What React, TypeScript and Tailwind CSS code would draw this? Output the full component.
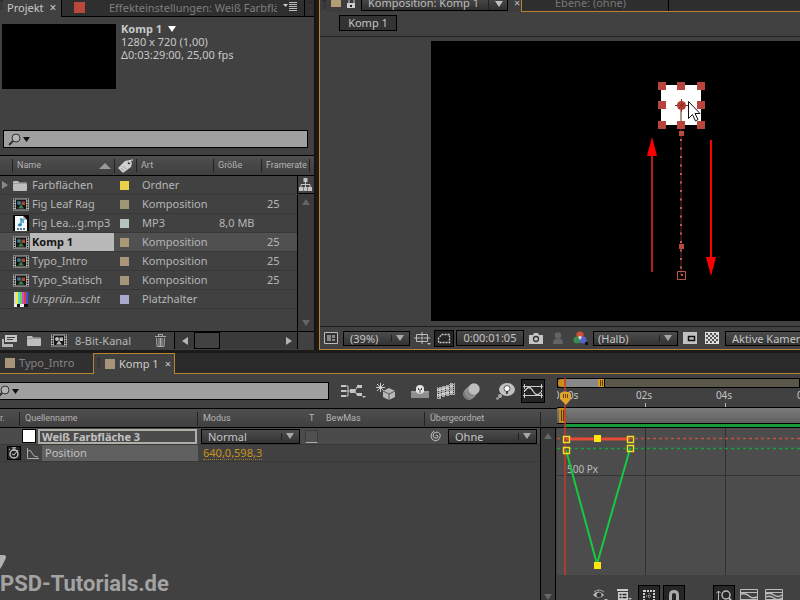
import React from "react";

const sans = "font-['Noto_Sans','Open_Sans',sans-serif]";
const small = "font-[Roboto,sans-serif] text-[9px] font-normal text-[#b4b4b4]";

function Down({ className = "" }: { className?: string }) {
  return (
    <svg width="8" height="6" viewBox="0 0 8 6" className={"shrink-0 " + className} fill="currentColor" aria-hidden="true">
      <path d="M0 0h8L4 6z" />
    </svg>
  );
}

function Grip() {
  return (
    <svg width="4" height="12" className="shrink-0" aria-hidden="true">
      <path d="M0 1h3M0 3h3M0 5h3M0 7h3M0 9h3" stroke="#161616" />
      <path d="M0 2h3M0 4h3M0 6h3M0 8h3M0 10h3" stroke="#5c5c5c" strokeWidth=".6" />
    </svg>
  );
}

function Dropdown({ label, value, width, pad = "pl-1" }: { label: string; value: string; width: string; pad?: string }) {
  return (
    <span className={"relative block h-[15px] shrink-0 border border-black bg-linear-to-b from-[#4c4c4c] to-[#333] " + width}>
      <select aria-label={label} className={"block h-full w-full appearance-none bg-transparent text-[11px] leading-[13px] text-[#c6c6c6] outline-none " + pad}>
        <option>{value}</option>
      </select>
      <span className="pointer-events-none absolute inset-y-0 right-0 flex w-[18px] items-center justify-center">
        <span className="absolute inset-y-[3px] left-0 w-px bg-[#202020]" />
        <Down className="text-[#a8a8a8]" />
      </span>
    </span>
  );
}

function SearchBox({ label, className, cut }: { label: string; className: string; cut?: boolean }) {
  return (
    <label className={"flex h-[18px] items-center border border-black bg-[#a0a0a0] " + className}>
      <svg width={cut ? 20 : 27} height="14" viewBox={cut ? "7 0 20 14" : "0 0 27 14"} aria-hidden="true" className="shrink-0">
        <circle cx="12" cy="6" r="4" fill="#b4b4b4" stroke="#333" />
        <path d="M9 9l-4 4" stroke="#333" strokeWidth="2" />
        <path d="M19 5h7l-3.500 5z" fill="#111" />
      </svg>
      <input aria-label={label} className="min-w-0 flex-1 bg-transparent text-[11px] text-black outline-none" />
    </label>
  );
}

function CompIcon({ mono }: { mono?: boolean }) {
  return (
    <svg width="16" height="13" viewBox="0 0 16 13" aria-hidden="true" className="shrink-0">
      <path d="M0 .5h16v12H0z" fill="#b4b4b4" />
      <path d="M1.500 1v11M14.500 1v11" stroke="#222" strokeDasharray="1.500 1" strokeWidth="1.500" />
      <path d="M3 1.500h10v10H3z" fill="#151515" />
      <circle cx="6" cy="5" r="2" fill={mono ? "#bbb" : "#3d7894"} />
      <path d="M8.500 3.500h3.500v3.500H8.500z" fill={mono ? "#bbb" : "#a5492f"} />
      <path d="M5 10.500l3-4 3 4z" fill={mono ? "#bbb" : "#3b8145"} />
    </svg>
  );
}

function FolderIcon() {
  return (
    <svg width="14" height="11" viewBox="0 0 14 11" aria-hidden="true" className="shrink-0">
      <path d="M0 2q0-1 1-1h4l1 1.500h7q1 0 1 1V10q0 1-1 1H1q-1 0-1-1z" fill="#bdbdbd" />
      <path d="M0 3.500h14" stroke="#888" strokeWidth=".6" />
    </svg>
  );
}

function Mp3Icon() {
  return (
    <svg width="16" height="16" viewBox="0 0 16 16" aria-hidden="true" className="shrink-0">
      <path d="M0 0h16v16H0z" fill="#050505" />
      <path d="M2 1h8l4 4v11H2z" fill="#f4f7fa" />
      <path d="M10 1v4h4z" fill="#aab4be" />
      <path d="M8 3v7M8 4q3 1 2 4" stroke="#2386bd" strokeWidth="1.300" fill="none" />
      <ellipse cx="6.800" cy="10" rx="2" ry="1.400" fill="#2386bd" />
      <path d="M4 14h8" stroke="#58798e" strokeDasharray="2 1" strokeWidth="2" />
    </svg>
  );
}

function BarsIcon() {
  const colors = ["#d8d8d8", "#f0ee38", "#58d4dd", "#65d24b", "#d64bc9", "#d64343", "#4850ce"];
  return (
    <svg width="16" height="15" viewBox="0 0 16 15" aria-hidden="true" className="shrink-0">
      {colors.map((c, i) => (
        <rect key={c} x={1 + i * 2} width="2.200" height="12" fill={c} />
      ))}
      <path d="M1 12h14v3H1z" fill="#111" />
      <path d="M1 12h3v3H1zM7 12h4v3H7z" fill="#eee" />
    </svg>
  );
}

const items = [
  { name: "Farbflächen", kind: "folder", color: "bg-[#e8d248]", type: "Ordner", size: "", rate: "" },
  { name: "Fig Leaf Rag", kind: "comp", color: "bg-[#9d9775]", type: "Komposition", size: "", rate: "25" },
  { name: "Fig Lea...g.mp3", kind: "mp3", color: "bg-[#b5c2bd]", type: "MP3", size: "8,0 MB", rate: "" },
  { name: "Komp 1", kind: "comp", color: "bg-[#a99878]", type: "Komposition", size: "", rate: "25", selected: true },
  { name: "Typo_Intro", kind: "comp", color: "bg-[#a9957c]", type: "Komposition", size: "", rate: "25" },
  { name: "Typo_Statisch", kind: "comp", color: "bg-[#a3967a]", type: "Komposition", size: "", rate: "25" },
  { name: "Ursprün...scht", kind: "bars", color: "bg-[#aaa8cc]", type: "Platzhalter", size: "", rate: "", italic: true },
];

function ItemIcon({ kind }: { kind: string }) {
  if (kind === "folder") return <FolderIcon />;
  if (kind === "mp3") return <Mp3Icon />;
  if (kind === "bars") return <BarsIcon />;
  return <CompIcon />;
}

function ProjectPanel() {
  const th = "border-b border-black p-0 text-left align-middle " + small;
  const cell = "border-b border-[#383838] p-0";
  return (
    <section className="flex w-[316px] shrink-0 flex-col border-r-2 border-[#151515] bg-[#414141]">
      <div className="flex h-[17px] shrink-0 items-stretch bg-[#2d2d2d] text-[11px] leading-4">
        <div className="flex w-[61px] items-start bg-[#414141] text-[#cacaca]">
          <Grip />
          <button className="ml-[3px]">Projekt</button>
          <button aria-label="Projekt schließen" className="ml-1.5 text-[12px]">×</button>
        </div>
        <div className="flex min-w-0 flex-1 items-start border-b border-l border-black bg-[#2f2f2f]">
          <span className="mt-0.5 ml-3 size-[11px] shrink-0 bg-[#b8483c]" />
          <button className="ml-6 w-[168px] overflow-hidden text-left whitespace-nowrap text-[#7e7e7e]">Effekteinstellungen: Weiß Farbfläche 3</button>
          <button aria-label="Bedienfeldmenü" className="mt-px ml-1.5">
            <svg width="15" height="11" viewBox="0 0 15 11">
              <path d="M0 3h5L2.500 6z" fill="#ccc" />
              <path d="M6 1.500h8M6 3.500h8M6 5.500h8M6 7.500h8M6 9.500h8" stroke="#bbb" />
            </svg>
          </button>
          <span className="ml-1.5 flex h-full items-center border-l border-black pl-1"><Grip /></span>
        </div>
      </div>

      <div className="flex h-[113px] shrink-0 gap-[5px] pl-0.5">
        <div className="mt-[7px] h-[65px] w-[114px] bg-black" />
        <div className="pt-[5px] text-[11px] leading-[13px] whitespace-nowrap text-[#c8c8c8]">
          <h1 className="flex items-center gap-1.5 font-bold">Komp 1 <Down className="text-white" /></h1>
          <p>1280 x 720 (1,00)</p>
          <p>Δ0:03:29:00, 25,00 fps</p>
        </div>
      </div>
      <SearchBox label="Projekt durchsuchen" className="mr-1.5 ml-[3px] shrink-0" />

      <table className="mt-[7px] w-full table-fixed border-collapse border-t border-black text-[11px] text-[#b6b6b6]">
        <colgroup>
          <col className="w-[114px]" />
          <col className="w-[22px]" />
          <col className="w-[77px]" />
          <col className="w-[48px]" />
          <col />
          <col className="w-[17px]" />
        </colgroup>
        <thead>
          <tr className="h-5 bg-linear-to-b from-[#4f4f4f] to-[#3e3e3e]">
            <th className={th}>
              <span className="ml-3 flex items-center justify-between border-l border-[#222] pl-1">
                Name
                <svg width="12" height="6" viewBox="0 0 12 6" className="mr-[3px]"><path d="M0 6l6-6 6 6z" fill="#999" /></svg>
              </span>
            </th>
            <th className={th}>
              <span className="flex border-l border-[#222] pl-0.5">
                <svg width="16" height="14" viewBox="0 0 16 14" aria-label="Etikett">
                  <path d="M8 2l5-1 2 3-1 4-8 6-5-5z" fill="#d0d0d0" />
                  <circle cx="12" cy="4" r="1.300" fill="#333" />
                  <path d="M12 4q1-4 4-3" stroke="#eee" fill="none" />
                  <path d="M4 9l3 3M6 7l3 3" stroke="#888" strokeWidth=".7" />
                </svg>
              </span>
            </th>
            <th className={th}><span className="block border-l border-[#222] pl-1">Art</span></th>
            <th className={th}><span className="block border-l border-[#222] pl-1">Größe</span></th>
            <th className={th} colSpan={2}><span className="mr-1 block border-x border-[#222] pl-1">Framerate</span></th>
          </tr>
        </thead>
        <tbody>
          {items.map((it, i) => (
            <tr key={it.name} className={"h-[19px] " + (it.selected ? "bg-[#505050]" : "")}>
              <td className={cell}>
                <span className="flex h-[18px] items-center whitespace-nowrap">
                  <span className="w-[13px] shrink-0">
                    {it.kind === "folder" && (
                      <svg width="6" height="8" viewBox="0 0 6 8" className="ml-0.5"><path d="M0 0l6 4-6 4z" fill="#8a8a8a" /></svg>
                    )}
                  </span>
                  <span className="flex w-[17px] shrink-0"><ItemIcon kind={it.kind} /></span>
                  <span className={"h-[18px] flex-1 pl-0.5 leading-[18px] " + (it.selected ? "bg-[#b9b9b9] font-bold text-[#151515]" : it.italic ? "italic" : "")}>{it.name}</span>
                </span>
              </td>
              <td className={cell}><span className={"ml-1.5 block size-[9px] " + it.color} /></td>
              <td className={cell + " pl-1.5 leading-[18px]"}>{it.type}</td>
              <td className={cell + " pl-1.5 leading-[18px] whitespace-nowrap"}>{it.size}</td>
              <td className={cell + " pl-1.5 leading-4"}>{it.rate}</td>
              {i === 0 && (
                <td rowSpan={8} className="border-l border-black p-0 align-top">
                  <div className="flex h-[155px] flex-col items-center">
                    <button aria-label="Flussdiagramm" className="flex h-[18px] w-full items-center justify-center border-b border-black">
                      <svg width="13" height="13" viewBox="0 0 13 13" fill="#c4c4c4">
                        <path d="M4.500 0h4v4h-4zM0 9h4v4H0zM4.500 9h4v4h-4zM9 9h4v4H9z" />
                        <path d="M6.500 4v5M2 9V6.500h9V9" fill="none" stroke="#c4c4c4" />
                      </svg>
                    </button>
                    <div className="flex w-full flex-1 flex-col items-center justify-between bg-[#3b3b3b] py-[5px] text-[#656565]">
                      <button aria-label="Nach oben" className="flex"><Down className="rotate-180" /></button>
                      <button aria-label="Nach unten" className="flex"><Down /></button>
                    </div>
                  </div>
                </td>
              )}
            </tr>
          ))}
          <tr className="h-[22px]"><td colSpan={5} /></tr>
        </tbody>
      </table>

      <div className="flex h-[18px] shrink-0 items-center border-t border-black text-[11px] text-[#b6b6b6]">
        <button aria-label="Interpretieren" className="ml-0.5">
          <svg width="15" height="12" viewBox="0 0 15 12">
            <path d="M3 0h12v7H3z" fill="#c5c5c5" />
            <path d="M5 2.500h8M5 4.500h6" stroke="#444" />
            <path d="M0 4h2v5h9v3H0z" fill="#b5b5b5" />
          </svg>
        </button>
        <button aria-label="Neuer Ordner" className="ml-2.5"><FolderIcon /></button>
        <button aria-label="Neue Komposition" className="ml-2.5"><CompIcon mono /></button>
        <button className="ml-2 leading-4">8-Bit-Kanal</button>
        <button aria-label="Löschen" className="ml-6">
          <svg width="11" height="13" viewBox="0 0 11 13" fill="none" stroke="#aaa">
            <path d="M0 2.500h11M3.500 2V.5h4V2M1.500 4l.5 8.500h7l.5-8.500M4 4v8M5.500 4v8M7 4v8" />
          </svg>
        </button>
        <div className="ml-2 flex h-full flex-1 items-stretch border-l border-black bg-[#3a3a3a]">
          <button aria-label="Nach links" className="flex w-[19px] items-center justify-center"><Down className="rotate-90 text-[#b5b5b5]" /></button>
          <span className="w-[26px] border border-black bg-[#424242]" />
          <button aria-label="Nach rechts" className="ml-auto flex w-[17px] items-center justify-center"><Down className="-rotate-90 text-[#b5b5b5]" /></button>
        </div>
        <span className="h-full w-[17px] border-l border-black" />
      </div>
    </section>
  );
}

const handles = [
  [231, 45], [250, 45], [270, 45], [231, 64], [270, 64], [231, 84], [250, 84], [270, 84],
];

function Canvas() {
  return (
    <svg className="block h-[280px] w-full bg-black" aria-label="Kompositionsansicht">
      <path d="M230 44h40v40h-40z" fill="#fff" />
      <path d="M250 64v170" stroke="#6b2722" />
      <path d="M250 98v134" stroke="#c25c53" strokeWidth="2" strokeDasharray="2 6.500" />
      {handles.map(([x, y]) => (
        <path key={`${x}-${y}`} d={`M${x - 4} ${y - 4}h8v8h-8z`} fill="#b8453c" />
      ))}
      <circle cx="250.500" cy="64.500" r="4.500" fill="#b8453c" />
      <path d="M244 64.500h13M250.500 58v13M247 61l7 7M254 61l-7 7" stroke="#9a3028" />
      <path d="M248 90h5v5h-5zM248 203h5v5h-5z" fill="#bb4940" />
      <path d="M246.500 230.500h8v8h-8z" fill="none" stroke="#c0564c" />
      <path d="M250 233h2v2h-2z" fill="#c0564c" />
      <path d="M221 115v116" stroke="#b61d1d" strokeWidth="2" />
      <path d="M221 96l5 19h-10z" fill="red" />
      <path d="M280 99v118" stroke="red" strokeWidth="2" />
      <path d="M280 235l-5-19h10z" fill="red" />
      <path d="M257.500 60.500v17l4-4 3 6.500 2.500-1.500-3-6h5z" fill="#fff" stroke="#111" />
    </svg>
  );
}

function CompPanel() {
  return (
    <section className="ml-[3px] flex min-w-0 flex-1 flex-col overflow-hidden border-b border-l border-[#b98432] bg-[#414141]">
      <div className="flex h-3 shrink-0 items-stretch text-[11px] whitespace-nowrap text-[#bebebe]">
        <div className="flex w-[201px] shrink-0 items-start bg-[#3d3d3d] pl-[3px]">
          <Grip />
          <span className="ml-1 h-[7px] w-2.5 bg-[#b19c73]" />
          <svg width="9" height="9" viewBox="0 0 9 9" className="ml-1.5" aria-label="Sperren">
            <path d="M2 4V0M7 3V0" stroke="#ccc" />
            <path d="M0 3h8v5H0z" fill="#ccc" /><path d="M3 5h2v2H3z" fill="#222" />
          </svg>
          <button className="ml-[5px] flex h-[11px] w-[147px] items-end justify-between border border-t-0 border-black bg-linear-to-b from-[#454545] to-[#303030] pr-1 pl-1.5">
            <span className="leading-[15px]">Komposition: Komp 1</span>
            <span className="flex h-full items-start border-l border-[#222] pt-px pl-1.5"><Down className="text-[#c0c0c0]" /></span>
          </button>
          <button aria-label="Komposition schließen" className="ml-1.5 leading-[5px]">×</button>
        </div>
        <div className="flex min-w-0 flex-1 items-stretch border-b border-l border-[#b98432] bg-[#2e2e2e] text-[#777]">
          <button className="flex w-[147px] shrink-0 items-end border-r border-black pl-[33px]"><span className="leading-4">Ebene: (ohne)</span></button>
        </div>
      </div>
      <div className="flex h-[25px] shrink-0 items-start border-b border-[#222] pt-[3px] pl-[19px]">
        <button className="h-4 w-[58px] border border-black bg-[#333] text-[11px] leading-[14px] text-[#c5c5c5]">Komp 1</button>
      </div>
      <div className="shrink-0 pt-1 pb-[5px] pl-[111px]"><Canvas /></div>
      <div className="flex min-h-0 flex-1 items-center overflow-hidden border-t border-[#1c1c1c] text-[11px] whitespace-nowrap text-[#c4c4c4]">
        <button aria-label="Vorschau" className="ml-1 shrink-0">
          <svg width="14" height="12" viewBox="0 0 14 12"><path d="M.5.5h13v11H.5z" fill="#333" stroke="#bbb" /><path d="M3 3h4v6H3zM8 3h3v3H8zM8 7h3v2H8z" fill="#888" /></svg>
        </button>
        <span className="ml-[5px]"><Dropdown label="Vergrößerung" value="(39%)" width="w-[67px]" pad="pl-1.5" /></span>
        <button aria-label="Raster" className="ml-1 shrink-0">
          <svg width="17" height="14" viewBox="0 0 17 14" fill="none" stroke="#bbb"><path d="M2.500 3.500h11v7h-11zM0 7h6M10 7h6M8 1v4M8 9v4M6.500 7h3M8 5.500v3" /><path d="M13 12h4l-2 2z" fill="#bbb" stroke="none" /></svg>
        </button>
        <button aria-label="Maske" className="ml-[3px] flex h-[17px] w-5 shrink-0 items-center justify-center border border-black bg-[#252525]">
          <svg width="14" height="11" viewBox="0 0 14 11"><path d="M1.500 9.500v-4l3-4h8v8z" fill="none" stroke="#ccc" strokeWidth="1.300" strokeDasharray="2 1" /></svg>
        </button>
        <button className="ml-0.5 h-4 w-[68px] shrink-0 border border-black bg-linear-to-b from-[#484848] to-[#333] leading-[14px]">0:00:01:05</button>
        <button aria-label="Schnappschuss" className="ml-[5px] shrink-0">
          <svg width="14" height="11" viewBox="0 0 14 11"><path d="M0 2h4l1-2h4l1 2h4v9H0z" fill="#c4c4c4" /><circle cx="7" cy="6" r="2.500" fill="#c4c4c4" stroke="#333" strokeWidth="1.300" /></svg>
        </button>
        <button aria-label="Schnappschuss anzeigen" className="ml-2.5 shrink-0">
          <svg width="10" height="13" viewBox="0 0 10 13" fill="#646464"><circle cx="5" cy="3.500" r="3.300" /><path d="M0 12q0-5 3-5h4q3 0 3 5z" /></svg>
        </button>
        <button aria-label="Kanäle" className="ml-2.5 shrink-0">
          <svg width="16" height="14" viewBox="0 0 16 14"><circle cx="7" cy="4" r="3.600" fill="#d05035" /><circle cx="4" cy="9" r="3.600" fill="#388b48" /><circle cx="10" cy="9" r="3.600" fill="#5662cc" /><path d="M5 6l2-1 2 1-2 3z" fill="#ddd" /><path d="M12 11h3v3h-3z" fill="#111" /></svg>
        </button>
        <span className="ml-1"><Dropdown label="Auflösung" value="(Halb)" width="w-[85px]" /></span>
        <button aria-label="Interessenbereich" className="ml-[5px] shrink-0">
          <svg width="14" height="12" viewBox="0 0 14 12"><path d="M0 0h14v12H0z" fill="#c2c2c2" /><path d="M5.500 4.500h6v4h-6z" fill="#bbb" stroke="#111" strokeWidth="1.500" /></svg>
        </button>
        <button aria-label="Transparenzraster" className="mr-1.5 ml-2 shrink-0">
          <svg width="14" height="12" viewBox="0 0 14 12"><path d="M0 0h14v12H0z" fill="#ddd" /><path d="M1 2h12M1 6h12M1 10h12" stroke="#555" strokeWidth="2" strokeDasharray="2 2" /><path d="M3 4h10M3 8h10" stroke="#555" strokeWidth="2" strokeDasharray="2 2" /></svg>
        </button>
        <Dropdown label="Kameraansicht" value="Aktive Kamera" width="w-[110px]" pad="pl-1.5" />
      </div>
    </section>
  );
}

function TimelineTools() {
  return (
    <div className="flex h-[35px] shrink-0 items-center border-b border-black">
      <SearchBox label="Ebenen durchsuchen" className="w-[329px] shrink-0 border-l-0" cut />
      <button aria-label="Mini-Flussdiagramm" className="ml-3">
        <svg width="25" height="14" viewBox="0 0 25 14" fill="#c4c4c4"><path d="M0 1h5v2H0zM0 6h5v2H0zM0 11h5v2H0zM9 5h5v4H9zM16 1h5v3h-5zM16 9h5v3h-5zM21 12h4l-2 2z" /><path d="M5 2h2v10H5M5 7h4M14 7l2-4h5M14 7l2 4" fill="none" stroke="#c4c4c4" /></svg>
      </button>
      <button aria-label="Entwurf 3D" className="ml-2.5">
        <svg width="20" height="17" viewBox="0 0 20 17"><path d="M4.500 0v9M0 4.500h9M1 1l7 7M8 1L1 8" stroke="#ccc" /><path d="M13 5l6 3v6l-6 3-6-3V8z" fill="#b8b8b8" /><path d="M7 8l6 3 6-3M13 11v6" stroke="#555" fill="none" /></svg>
      </button>
      <button aria-label="Schüchterne Ebenen" className="ml-[15px]">
        <svg width="18" height="13" viewBox="0 0 18 13"><path d="M0 6h5l1 2h6l1-2h5v7H0z" fill="#8d8d8d" /><path d="M0 7h18" stroke="#a8a8a8" /><path d="M5 7V4q0-4 4-4t4 4v3q-4 4-8 0z" fill="#e4e4e4" /><path d="M7.500 3v2M10.500 3v2M9 4v4" stroke="#444" /></svg>
      </button>
      <button aria-label="Frame-Überblendung" className="ml-2">
        <svg width="18" height="16" viewBox="0 0 18 16"><path d="M0 4h4v12H0zM4 3h4v11H4zM8 2h4v11H8zM12 0h6v12h-6z" fill="#aaa" /><path d="M1.500 4v12M4.500 3v12M8.500 2v12M12.500 0v12M16.500 0v12" stroke="#333" strokeDasharray="1 1" /><path d="M0 7h4M4 6h4M8 5h4M13 3h3M0 12h4M4 11h4M8 10h4M13 9h3" stroke="#eee" /></svg>
      </button>
      <button aria-label="Bewegungsunschärfe" className="ml-2">
        <svg width="18" height="17" viewBox="0 0 18 17"><circle cx="6" cy="11" r="5.500" fill="#777" stroke="#999" strokeWidth=".7" /><circle cx="8" cy="9" r="5.500" fill="#888" stroke="#aaa" strokeWidth=".7" /><circle cx="11" cy="6" r="5.700" fill="#bdbdbd" /></svg>
      </button>
      <button aria-label="Ideensammlung" className="ml-[15px]">
        <svg width="19" height="17" viewBox="0 0 19 17"><ellipse cx="11" cy="6.500" rx="8" ry="6.500" fill="#c2c2c2" /><circle cx="4" cy="13" r="2" fill="#aaa" /><circle cx="1.500" cy="15.500" r="1.300" fill="#aaa" /><circle cx="11" cy="5.500" r="3" fill="#fff" stroke="#555" /><path d="M11 8v3" stroke="#444" strokeWidth="2" /></svg>
      </button>
      <button aria-label="Diagrammeditor" className="ml-1.5 flex h-6 w-6 items-center justify-center border border-black bg-[#242424]">
        <svg width="20" height="16" viewBox="0 0 20 16" fill="none" stroke="#ccc"><path d="M1.500 1v14M18.500 1v14" strokeDasharray="2 1" /><path d="M0 3.500h20M0 12.500h20" /><path d="M2 8q4-7 8 0t8 1" strokeWidth="1.300" /></svg>
      </button>
    </div>
  );
}

function LayerColumns() {
  return (
    <div className={"flex h-[19px] shrink-0 items-center border-b border-black bg-linear-to-b from-[#4e4e4e] to-[#404040] pt-0.5 " + small}>
      <span className="w-[19px]">r.</span>
      <span className="w-[178px] border-l border-[#222] pl-[5px]">Quellenname</span>
      <span className="w-[107px] border-l border-[#222] pl-[5px]">Modus</span>
      <span className="w-[22px] pl-[5px]">T</span>
      <span className="w-[98px]">BewMas</span>
      <span className="w-[117px] border-x border-[#222] pl-[5px]">Übergeordnet</span>
    </div>
  );
}

function TimelineLayers() {
  return (
    <div className="flex min-h-0 flex-1">
      <div className="flex w-[540px] flex-col text-[11px] text-[#c2c2c2]">
        <div className="flex h-[17px] items-center border-b border-[#383838] bg-[#4b4b4b]">
          <span className="ml-[22px] size-3.5 border border-black bg-white" />
          <span className="ml-0.5 h-[15px] w-[159px] border-2 border-[#aeb0a8] pl-0.5 leading-[11px] font-bold">Weiß Farbfläche 3</span>
          <span className="ml-1"><Dropdown label="Modus" value="Normal" width="w-[99px]" pad="pl-1.5" /></span>
          <label className="ml-[5px] flex"><input type="checkbox" aria-label="Transparenz erhalten" className="size-[13px] appearance-none border border-[#3b3b3b] border-b-[#aaa] bg-[#505050]" /></label>
          <svg width="12" height="12" viewBox="0 0 12 12" className="ml-28" aria-label="Übergeordnet auswählen"><path d="M6 6q0-1 1-1 2 1 0 3-3 1-4-2Q3 2 7 2q4 1 3 5-1 4-5 4-4-1-4-5 0-3 3-5" fill="none" stroke="#bbb" /></svg>
          <span className="ml-1.5"><Dropdown label="Übergeordnet" value="Ohne" width="w-[89px]" pad="pl-1.5" /></span>
        </div>
        <div className="flex h-[17px] items-center border-b border-[#383838]">
          <button aria-label="Stoppuhr" className="ml-[7px] flex h-[14px] w-[14px] items-center justify-center border border-black bg-[#242424]">
            <svg width="12" height="12" viewBox="0 0 12 12" fill="none" stroke="#ccc"><circle cx="6" cy="7" r="4" strokeWidth="1.300" /><path d="M4 .8h4M6 1v2M2 3L1 2M4 7l2 1 4-5" /></svg>
          </button>
          <svg width="12" height="11" viewBox="0 0 12 11" className="ml-1.5" aria-label="Diagramm"><path d="M.5 0v10.500H12M1 3q3-2 4 2t6 4" fill="none" stroke="#aaa" /></svg>
          <span className="ml-[3px] h-4 w-[156px] bg-[#606060] pl-[3px] leading-4">Position</span>
          <span className="ml-[5px] flex leading-3 text-[#cd921c]">
            <button className="border-b border-dotted border-[#a07828]">640,0</button>,
            <button className="border-b border-dotted border-[#a07828]">598,3</button>
          </span>
        </div>
        <div className="mt-auto pb-1 font-[Roboto,sans-serif] text-[#a3a3a3]">
          <svg width="6" height="18" viewBox="0 0 6 18" aria-hidden="true"><path d="M0 1h4q2 0 2 3l-4 8-2 3z" fill="#b0b0b0" /></svg>
          <p className="text-[22px] leading-6 font-bold">PSD-Tutorials.de</p>
        </div>
      </div>
      <div className="flex w-4 flex-col items-center justify-between border-x border-black bg-[#3a3a3a] pt-[5px] text-[#666]">
        <button aria-label="Nach oben" className="flex"><Down className="rotate-180" /></button>
        <button aria-label="Nach unten" className="flex"><Down /></button>
      </div>
    </div>
  );
}

const keys = [[9, 61], [9, 72], [73, 61], [73, 70]];

function GraphEditor() {
  return (
    <div className="relative flex h-[197px] shrink-0 flex-col overflow-hidden">
      <div className="flex h-2.5 shrink-0 border border-black bg-[#5a574b]">
        <span className="w-[7px] rounded-l bg-[#cb8d1a]" />
        <span className="w-[33px] bg-[#888]" />
        <span className="flex w-[7px] justify-center gap-px border-r border-black bg-[#d79b22] py-px"><i className="w-px bg-[#5b3a06]" /><i className="w-px bg-[#5b3a06]" /></span>
      </div>
      <svg className="block h-[19px] w-full shrink-0 bg-[#414141]" fontSize="10" fill="#c4c4c4" textAnchor="middle">
        <text x="9" y="11">0:00s</text>
        <text x="87" y="11">02s</text>
        <text x="167" y="11">04s</text>
        <text x="248" y="11">06s</text>
        <path d="M88.500 15v4M168.500 15v4" stroke="#bbb" />
      </svg>
      <div className="flex h-[17px] shrink-0 border-y border-black bg-linear-to-b from-[#7b7b7b] to-[#606060]">
        <span className="ml-0.5 flex w-1.5 justify-center gap-px bg-[#c98c1d] py-0.5"><i className="w-px bg-[#5b3a06]" /><i className="w-px bg-[#5b3a06]" /></span>
      </div>
      <div className="ml-2 h-[3px] shrink-0 bg-[#17993a]" />
      <svg className="block w-full flex-1 border-t border-black bg-[#4c4c4c]" aria-label="Diagramm">
        <path d="M88.500 0v148M168.500 0v148" stroke="#303030" />
        <line x1="0" x2="100%" y1="47.500" y2="47.500" stroke="#343434" />
        <line x1="0" x2="100%" y1="10.500" y2="10.500" stroke="#c8503f" strokeWidth="1.500" strokeDasharray="3 3" />
        <line x1="0" x2="100%" y1="20.500" y2="20.500" stroke="#16a33b" strokeWidth="1.500" strokeDasharray="3 3" />
        <text x="10" y="45" fontSize="10" fill="#bcbcbc">500 Px</text>
      </svg>
      <svg className="pointer-events-none absolute inset-0 h-full w-full" aria-hidden="true">
        <path d="M9 61h64" stroke="#e34b36" strokeWidth="3" />
        <path d="M9 72l31 114L73 71" fill="none" stroke="#14cb3d" strokeWidth="2" />
        <path d="M8 0v197" stroke="#c93a26" strokeWidth="1.500" />
        {keys.map(([x, y]) => (
          <path key={`${x}-${y}`} d={`M${x - 2.5} ${y - 2.5}h6v6h-6z`} fill="none" stroke="#f2df24" strokeWidth="1.400" />
        ))}
        <path d="M37 57h7v7h-7zM37 184h7v7h-7z" fill="#ffe40e" />
        <path d="M3 17q0-3 3-3h5q3 0 3 3v4l-5 6-6-6z" fill="#e0a32b" />
        <path d="M6.500 16v4M8.500 16v4M10.500 16v4" stroke="#694514" />
      </svg>
    </div>
  );
}

function GraphTools() {
  const on = "flex h-6 w-[22px] items-start justify-center border border-black bg-[#262626] pt-1";
  return (
    <div className="flex min-h-0 flex-1 items-start pt-2.5 pl-9">
      <button aria-label="Eigenschaften anzeigen" className="mt-1">
        <svg width="15" height="12" viewBox="0 0 15 12"><path d="M0 6q5-7 11 0-5 6-11 0z" fill="#bbb" /><circle cx="6" cy="6" r="2.500" fill="#333" /><path d="M1 3q5-4 10 0" fill="none" stroke="#aaa" /><path d="M11 10h4l-2 2z" fill="#bbb" /></svg>
      </button>
      <button aria-label="Diagrammtyp" className="mt-1 ml-[9px]">
        <svg width="15" height="12" viewBox="0 0 15 12"><path d="M0 0h11v2H0zM1 3h10v9H1z" fill="#ccc" /><path d="M2.500 5.500h2M5.500 5.500h4M2.500 8.500h2M5.500 8.500h4" stroke="#222" strokeWidth="1.500" /><path d="M11 9h4l-2 2z" fill="#bbb" /></svg>
      </button>
      <button aria-label="Transformationsrahmen" className={on + " ml-1.5"}>
        <svg width="12" height="12" viewBox="0 0 12 12"><path d="M1 1h10v10H1z" fill="none" stroke="#ccc" strokeWidth="2" strokeDasharray="2 1" /><path d="M3 6h6M6 3v6" stroke="#ccc" strokeDasharray="1 1" /></svg>
      </button>
      <button aria-label="Ausrichten" className={on + " ml-[3px]"}>
        <svg width="12" height="13" viewBox="0 0 12 13"><path d="M2.500 13V5q0-3.500 3.500-3.500T9.500 5v8" fill="none" stroke="#aaa" strokeWidth="3" /></svg>
      </button>
      <button aria-label="Höhe automatisch anpassen" className={on + " ml-7"}>
        <svg width="17" height="14" viewBox="0 0 17 14" fill="none" stroke="#bbb"><path d="M2.500 1v12M.5 3l2-2 2 2M.5 11l2 2 2-2" /><circle cx="10" cy="5" r="4" strokeWidth="1.500" /><path d="M13 8l4 5" strokeWidth="2" /></svg>
      </button>
      {["Auswahl einpassen", "Alles einpassen"].map((label, i) => (
        <button key={label} aria-label={label} className={i ? "mt-1 ml-[7px]" : "mt-1 ml-[5px]"}>
          <svg width="18" height="13" viewBox="0 0 18 13" fill="none" stroke="#bbb"><path d="M.5.5h17v12H.5zM0 3.500h18M0 10.500h18" /><path d={i ? "M1 5q4-2 8 1t8 0M1 8q4-2 8 1t8 0" : "M1 5q5-1 8 2t8 1"} strokeWidth="1.500" /></svg>
        </button>
      ))}
    </div>
  );
}

function Timeline() {
  return (
    <section className="flex min-h-0 flex-1 flex-col overflow-hidden bg-[#414141]">
      <div className="flex h-[21px] shrink-0 items-stretch bg-[#2a2a2a] text-[11px]">
        <div className="flex w-[93px] items-center border-b border-[#b98432] bg-[#303030] pl-[5px] text-[#858585]">
          <span className="size-2.5 bg-[#a8947a]" />
          <button className="ml-1">Typo_Intro</button>
        </div>
        <div className="flex w-[82px] items-center border-x border-t border-[#b98432] bg-[#414141] pl-[3px] text-[#cacaca]">
          <Grip />
          <span className="ml-1 size-2.5 shrink-0 bg-[#a8947a]" />
          <button className="ml-1 whitespace-nowrap">Komp 1</button>
          <button aria-label="Komp 1 schließen" className="ml-1.5">×</button>
        </div>
        <div className="flex-1 border-b border-[#b98432]" />
      </div>
      <div className="flex min-h-0 flex-1">
        <div className="flex w-[557px] shrink-0 flex-col">
          <TimelineTools />
          <LayerColumns />
          <TimelineLayers />
        </div>
        <div className="flex min-w-0 flex-1 flex-col pt-1">
          <GraphEditor />
          <GraphTools />
        </div>
      </div>
    </section>
  );
}

export default function App() {
  return (
    <main className={"flex h-screen flex-col overflow-hidden bg-[#1d1b19] " + sans}>
      <div className="flex h-[350px] shrink-0">
        <ProjectPanel />
        <CompPanel />
      </div>
      <div className="h-[3px] shrink-0" />
      <Timeline />
    </main>
  );
}
